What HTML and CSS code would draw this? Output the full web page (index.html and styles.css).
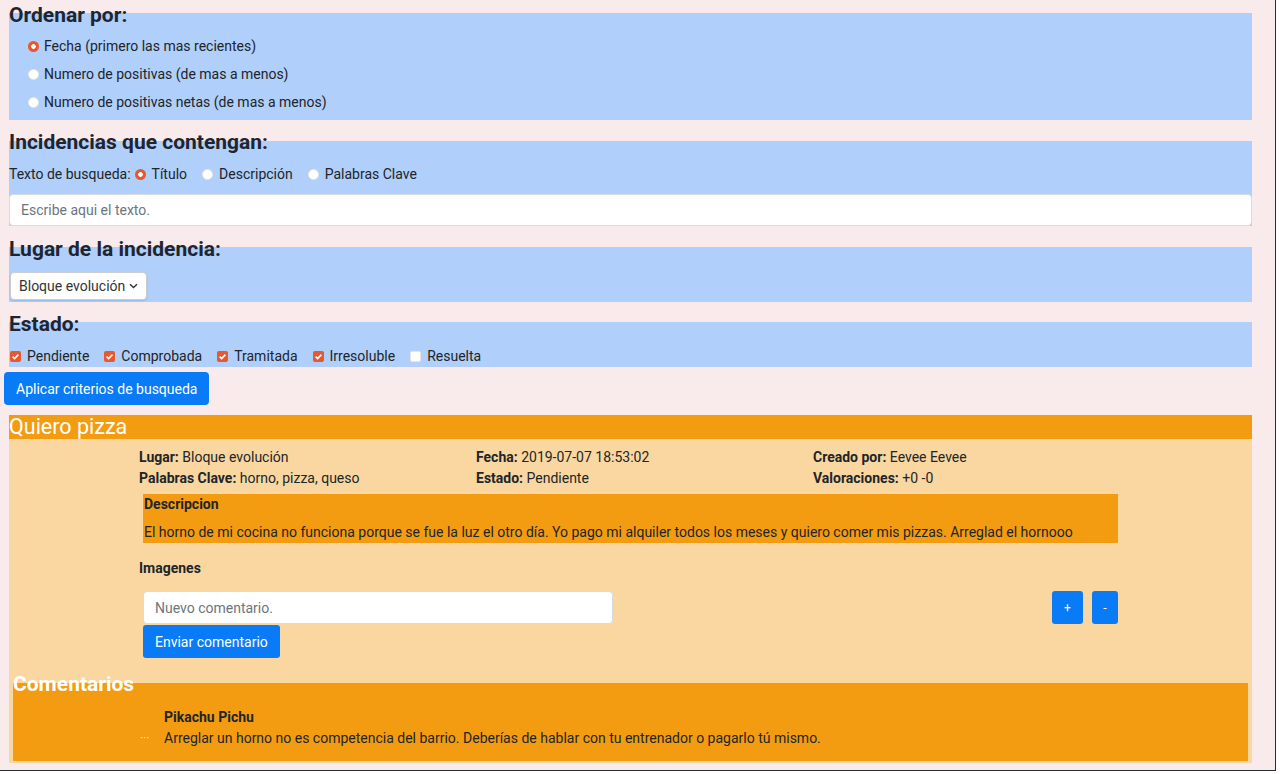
FILE: index.html
```html
<!DOCTYPE html>
<html lang="es">
<head>
<meta charset="utf-8">
<title>Incidencias</title>
<link rel="stylesheet" href="styles.css">
</head>
<body>
<div class="page">

  <section class="filter f-order">
    <h2 class="filter-title">Ordenar por:</h2>
    <div class="stack">
      <label class="opt-row"><span class="radio on"></span>Fecha (primero las mas recientes)</label>
      <label class="opt-row"><span class="radio"></span>Numero de positivas (de mas a menos)</label>
      <label class="opt-row"><span class="radio"></span>Numero de positivas netas (de mas a menos)</label>
    </div>
  </section>

  <section class="filter f-text">
    <h2 class="filter-title">Incidencias que contengan:</h2>
    <div class="inline-row">
      <span class="lead">Texto de busqueda:</span>
      <label class="opt"><span class="radio on"></span>Título</label>
      <label class="opt"><span class="radio"></span>Descripción</label>
      <label class="opt"><span class="radio"></span>Palabras Clave</label>
    </div>
    <input class="text-input search-input" type="text" placeholder="Escribe aqui el texto.">
  </section>

  <section class="filter f-place">
    <h2 class="filter-title">Lugar de la incidencia:</h2>
    <div class="select">
      <span>Bloque evolución</span>
      <svg class="chev" width="9" height="6" viewBox="0 0 9 6"><path d="M1 1.2 L4.5 4.6 L8 1.2" fill="none" stroke="#333" stroke-width="1.4"/></svg>
    </div>
  </section>

  <section class="filter f-state">
    <h2 class="filter-title">Estado:</h2>
    <div class="inline-row checks">
      <label class="opt"><span class="check on"><svg width="11" height="11" viewBox="0 0 11 11"><path d="M2.6 5.6 L4.6 7.6 L8.4 3.6" fill="none" stroke="#fff" stroke-width="1.7"/></svg></span>Pendiente</label>
      <label class="opt"><span class="check on"><svg width="11" height="11" viewBox="0 0 11 11"><path d="M2.6 5.6 L4.6 7.6 L8.4 3.6" fill="none" stroke="#fff" stroke-width="1.7"/></svg></span>Comprobada</label>
      <label class="opt"><span class="check on"><svg width="11" height="11" viewBox="0 0 11 11"><path d="M2.6 5.6 L4.6 7.6 L8.4 3.6" fill="none" stroke="#fff" stroke-width="1.7"/></svg></span>Tramitada</label>
      <label class="opt"><span class="check on"><svg width="11" height="11" viewBox="0 0 11 11"><path d="M2.6 5.6 L4.6 7.6 L8.4 3.6" fill="none" stroke="#fff" stroke-width="1.7"/></svg></span>Irresoluble</label>
      <label class="opt"><span class="check"></span>Resuelta</label>
    </div>
  </section>

  <button class="btn btn-apply" type="button">Aplicar criterios de busqueda</button>

  <article class="card">
    <header class="card-head">Quiero pizza</header>
    <div class="card-body">
      <div class="meta">
        <div><b>Lugar:</b> Bloque evolución</div>
        <div><b>Fecha:</b> 2019-07-07 18:53:02</div>
        <div><b>Creado por:</b> Eevee Eevee</div>
        <div><b>Palabras Clave:</b> horno, pizza, queso</div>
        <div><b>Estado:</b> Pendiente</div>
        <div><b>Valoraciones:</b> +0 -0</div>
      </div>

      <div class="desc">
        <div class="desc-title">Descripcion</div>
        <p class="desc-text">El horno de mi cocina no funciona porque se fue la luz el otro día. Yo pago mi alquiler todos los meses y quiero comer mis pizzas. Arreglad el hornooo</p>
      </div>

      <div class="images-title">Imagenes</div>

      <div class="comment-form">
        <div class="cf-left">
          <input class="text-input comment-input" type="text" placeholder="Nuevo comentario.">
          <button class="btn btn-send" type="button">Enviar comentario</button>
        </div>
        <div class="votes">
          <button class="btn btn-vote plus" type="button">+</button>
          <button class="btn btn-vote minus" type="button">-</button>
        </div>
      </div>

      <section class="comments">
        <h3 class="comments-title">Comentarios</h3>
        <div class="comment">
          <div class="c-author">Pikachu Pichu</div>
          <span class="c-dots">···</span>
          <div class="c-text">Arreglar un horno no es competencia del barrio. Deberías de hablar con tu entrenador o pagarlo tú mismo.</div>
        </div>
      </section>
    </div>
  </article>

</div>
</body>
</html>
```

FILE: styles.css
```css
html {
  background: #ffffff;
}
body {
  margin: 0;
  font-family: Roboto, "Liberation Sans", sans-serif;
  font-size: 14px;
  color: #212529;
}
.page {
  width: 1276px;
  height: 771px;
  box-sizing: border-box;
  padding: 0 23px 0 9px;
  background: #f9ebeb;
  border-right: 1px solid #2a2a2a;
  border-bottom: 1px solid #2a2a2a;
  overflow: hidden;
}

/* filter blocks */
.filter {
  display: flow-root;
  background: #b0cffb;
}
.filter-title {
  margin: -10px 0 0;
  height: 24px;
  font-size: 21px;
  line-height: 24px;
  font-weight: 700;
  color: #1f2530;
}
.f-order {
  margin-top: 13px;
  padding-bottom: 4px;
}
.f-order .stack {
  margin-top: 5px;
  padding-left: 19px;
  display: flex;
  flex-direction: column;
}
.opt-row {
  height: 28px;
  display: flex;
  align-items: center;
  gap: 5px;
  line-height: 21px;
}

.f-text {
  margin-top: 21px;
}
.f-text .filter-title {
  margin-top: -11px;
}
.inline-row {
  margin-top: 10px;
  height: 21px;
  display: flex;
  align-items: center;
  line-height: 21px;
}
.lead {
  margin-right: 4px;
}
.opt {
  display: inline-flex;
  align-items: center;
  gap: 6px;
  margin-right: 15px;
}
.radio {
  width: 11px;
  height: 11px;
  border-radius: 50%;
  box-sizing: border-box;
  background: #ffffff;
  border: 1px solid #e6e6ea;
  flex: none;
}
.radio.on {
  border: none;
  background: radial-gradient(circle, #ffffff 0 2px, #e6582f 2.6px);
}
.check {
  width: 11px;
  height: 11px;
  border-radius: 2px;
  box-sizing: border-box;
  background: #ffffff;
  border: 1px solid #e6e6ea;
  flex: none;
  display: inline-flex;
}
.check.on {
  border: none;
  background: #e6582f;
}
.checks {
  margin-top: 10px;
  padding-left: 1px;
}

.text-input {
  display: block;
  box-sizing: border-box;
  height: 33px;
  border: 1px solid #d8dbe0;
  border-radius: 4px;
  background: #ffffff;
  font-family: inherit;
  font-size: 14px;
  color: #495057;
  outline: none;
}
.text-input::placeholder {
  color: #6c757d;
}
.search-input {
  width: 100%;
  height: 32px;
  margin-top: 9px;
  padding: 0 11px;
}

.f-place {
  margin-top: 21px;
  padding-bottom: 2px;
}
.select {
  margin: 11px 0 0 1px;
  width: 137px;
  height: 28px;
  box-sizing: border-box;
  padding: 0 8px 0 8px;
  display: flex;
  align-items: center;
  justify-content: space-between;
  background: #ffffff;
  border: 1px solid #c9ccd1;
  border-radius: 4px;
  box-shadow: 0 1px 2px rgba(0, 0, 0, 0.12);
  color: #333;
}

.f-state {
  margin-top: 20px;
}

/* buttons */
.btn {
  font-family: inherit;
  font-size: 14px;
  color: #ffffff;
  background: #0a7bf6;
  border: none;
  border-radius: 4px;
  height: 33px;
  padding: 0 12px;
  cursor: pointer;
}
.btn-apply {
  display: block;
  margin: 5px 0 0 -5px;
}

/* card */
.card {
  margin-top: 10px;
}
.card-head {
  height: 24px;
  line-height: 24px;
  font-size: 21.5px;
  color: #ffffff;
  background: #f39c12;
}
.card-body {
  background: #fad7a0;
  padding: 8px 4px 2px;
}
.meta {
  margin-left: 126px;
  display: grid;
  grid-template-columns: 337px 337px 337px;
  line-height: 21px;
}
.meta b {
  font-weight: 700;
}
.desc {
  margin: 5px 0 0 130px;
  width: 975px;
  background: #f39c12;
  line-height: 21px;
  padding-left: 1px;
  box-sizing: border-box;
}
.desc-title {
  font-weight: 700;
}
.desc-text {
  margin: 7px 0 0;
}
.images-title {
  margin: 15px 0 0 126px;
  font-weight: 700;
  line-height: 21px;
}
.comment-form {
  margin: 12px 0 0 130px;
  width: 975px;
  display: flex;
  justify-content: space-between;
  align-items: flex-start;
}
.cf-left {
  display: flex;
  flex-direction: column;
  align-items: flex-start;
}
.comment-input {
  width: 470px;
  padding: 0 11px;
}
.btn-send {
  margin-top: 1px;
  border-radius: 3px;
}
.votes {
  display: flex;
  gap: 9px;
}
.btn-vote {
  padding: 0;
  font-size: 12px;
  border-radius: 3px;
}
.btn-vote.plus {
  width: 31px;
}
.btn-vote.minus {
  width: 26px;
}

.comments {
  display: flow-root;
  margin-top: 25px;
  background: #f39c12;
  padding-bottom: 12px;
}
.comments-title {
  margin: -11px 0 0;
  height: 24px;
  line-height: 24px;
  font-size: 21px;
  font-weight: 700;
  color: #ffffff;
}
.comment {
  margin-top: 11px;
  display: grid;
  grid-template-columns: 127px 24px 1fr;
  line-height: 21px;
}
.c-author {
  grid-column: 3;
  grid-row: 1;
  font-weight: 700;
}
.c-dots {
  grid-column: 2;
  grid-row: 2;
  font-size: 12px;
  color: #f3e2c2;
}
.c-text {
  grid-column: 3;
  grid-row: 2;
}
```
